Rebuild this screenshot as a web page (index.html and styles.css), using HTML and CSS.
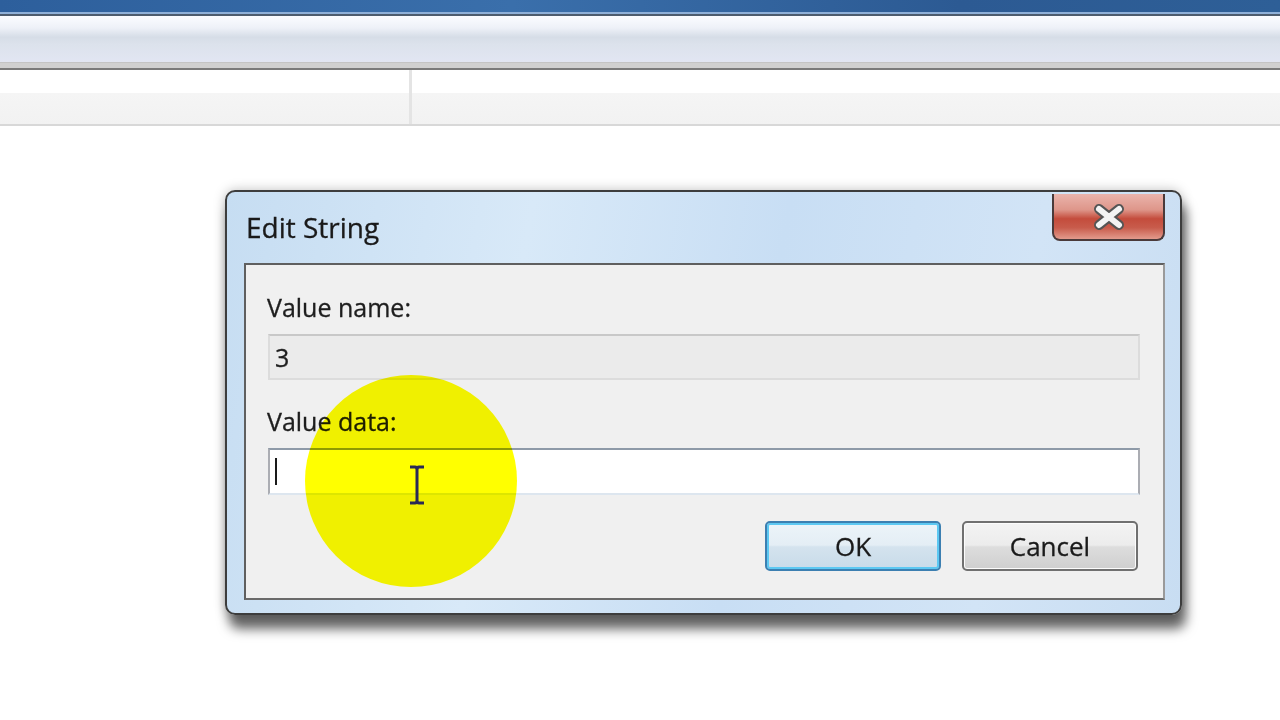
FILE: index.html
```html
<!DOCTYPE html>
<html lang="en">
<head>
  <meta charset="UTF-8">
  <title>Edit String</title>
  <link rel="stylesheet" href="styles.css">
</head>
<body>
  <!-- top of the registry editor window -->
  <div class="caption-strip"></div>
  <div class="toolbar"></div>
  <div class="list-header">
    <div class="col col-name"></div>
    <div class="col col-rest"></div>
  </div>

  <!-- the dialog -->
  <div class="dialog">
    <div class="titlebar">
      <span class="title">Edit String</span>
      <button class="close-btn" aria-label="Close">
        <svg width="36" height="28" viewBox="0 0 36 28">
          <path d="M8 6 L28 22 M28 6 L8 22" stroke="#555555" stroke-width="10" stroke-linecap="round"/>
          <path d="M8 6 L28 22 M28 6 L8 22" stroke="#f4f4f4" stroke-width="6" stroke-linecap="round"/>
        </svg>
      </button>
    </div>
    <div class="client">
      <label class="field-label">Value name:</label>
      <div class="field field-disabled">3</div>
      <label class="field-label label-data">Value data:</label>
      <div class="field field-edit"><span class="caret"></span></div>
      <div class="buttons">
        <button class="btn btn-default">OK</button>
        <button class="btn">Cancel</button>
      </div>
      <div class="highlight"></div>
      <svg class="ibeam" width="20" height="40" viewBox="0 0 20 40">
        <path d="M3 2 H8 Q10 2 10 5 V35 Q10 38 8 38 H3 M17 2 H12 Q10 2 10 5 M10 35 Q10 38 12 38 H17" fill="none" stroke="#2a2a55" stroke-width="3"/>
      </svg>
    </div>
  </div>
</body>
</html>
```

FILE: styles.css
```css
/* page */
body {
  margin: 0;
  background: #ffffff;
  font-family: "Open Sans", "Noto Sans", sans-serif;
  color: #1e1e1e;
  width: 1280px;
  height: 720px;
  overflow: hidden;
}
/* blue caption strip at the top */
.caption-strip {
  height: 12px;
  background: linear-gradient(90deg, #2d5f9c 0%, #3a6fab 40%, #2c5a93 75%, #2e5f97 100%);
  border-bottom: 2px solid #8fb0d8;
  box-shadow: 0 2px 0 #4d5c6e;
  margin-bottom: 2px;
}
/* toolbar gradient */
.toolbar {
  height: 47px;
  background: linear-gradient(#fbfcff 0%, #eef1f8 25%, #d6dde7 45%, #dce2ec 60%, #e2e6f3 100%);
  border-bottom: 5px solid #d0d0d0;
  box-shadow: inset 0 -1px 0 #c4c4c4;
}
/* list column headers */
.list-header {
  display: flex;
  height: 54px;
  border-top: 2px solid #7a7a7a;
  border-bottom: 2px solid #d8d8d8;
  background: linear-gradient(#ffffff 0%, #ffffff 42%, #f5f5f5 43%, #f2f2f2 100%);
}
.col-name {
  width: 409px;
  border-right: 3px solid #e4e4e4;
}
.col-rest {
  flex: 1;
}
/* dialog frame */
.dialog {
  width: 957px;
  height: 425px;
  margin: 64px 0 0 225px;
  border: 2px solid #3d3d3d;
  border-radius: 10px;
  background: linear-gradient(100deg, #c6ddf2 0%, #d8e9f8 30%, #c8def4 55%, #d2e4f6 80%, #c8ddf2 100%);
  box-shadow: 4px 14px 12px rgba(0, 0, 0, 0.6), 0 0 12px rgba(0, 0, 0, 0.25);
  padding: 0 15px 13px 17px;
  box-sizing: border-box;
  display: flex;
  flex-direction: column;
}
.titlebar {
  height: 71px;
  display: flex;
  justify-content: space-between;
  align-items: flex-start;
}
.title {
  margin: 16px 0 0 2px;
  font-size: 28px;
  color: #1a1a1a;
  -webkit-text-stroke: 0.3px #1a1a1a;
}
.close-btn {
  width: 113px;
  height: 47px;
  margin-top: 2px;
  border: 2px solid #4a3a3a;
  border-top: none;
  border-radius: 0 0 8px 8px;
  background: linear-gradient(#eab4ac 0%, #de968a 35%, #c44c3c 55%, #c85c4c 75%, #e39a8c 100%);
  display: flex;
  align-items: center;
  justify-content: center;
  padding: 0;
}
/* client area */
.client {
  position: relative;
  flex: 1;
  background: #f0f0f0;
  border: 2px solid #5f5f5f;
  border-right-color: #9a9a9a;
  border-bottom-color: #6a6a6a;
  padding: 22px 23px 0 21px;
  display: flex;
  flex-direction: column;
  overflow: hidden;
}
.field-label {
  font-size: 25px;
  line-height: 40px;
  -webkit-text-stroke: 0.3px #1e1e1e;
}
.label-data {
  margin-top: 21px;
}
.field {
  height: 46px;
  box-sizing: border-box;
  margin: 7px 0 0 1px;
  font-size: 25px;
  line-height: 42px;
  padding-left: 5px;
  -webkit-text-stroke: 0.3px #1e1e1e;
}
.field-disabled {
  background: #ebebeb;
  border: 2px solid #dcdcdc;
  border-top-color: #c8c8c8;
}
.field-edit {
  height: 47px;
  background: #ffffff;
  border: 2px solid #abadb3;
  border-top-color: #8e9aa8;
  border-bottom-color: #dde6ef;
  display: flex;
  align-items: center;
}
.caret {
  width: 2px;
  height: 27px;
  background: #1a1a1a;
}
/* buttons */
.buttons {
  display: flex;
  justify-content: flex-end;
  gap: 21px;
  margin: 26px 2px 0 0;
}
.btn {
  width: 176px;
  height: 50px;
  font-family: inherit;
  font-size: 26px;
  color: #1a1a1a;
  -webkit-text-stroke: 0.3px #1a1a1a;
  border: 2px solid #707070;
  border-radius: 5px;
  background: linear-gradient(#f3f3f3 0%, #ececec 48%, #dddddd 52%, #cfcfcf 100%);
  box-shadow: inset 0 0 0 1px #fcfcfc;
  padding: 0;
}
.btn-default {
  border-color: #3c7fb1;
  box-shadow: inset 0 0 0 2px #5cc8f2;
  background: linear-gradient(#ecf4f9 0%, #e4eef5 48%, #d4e3ee 52%, #c8dbe9 100%);
}
/* recording highlight */
.highlight {
  position: absolute;
  left: 59px;
  top: 110px;
  width: 212px;
  height: 212px;
  border-radius: 50%;
  background: #ffff00;
  mix-blend-mode: multiply;
  pointer-events: none;
}
.ibeam {
  position: absolute;
  left: 161px;
  top: 200px;
}
```
